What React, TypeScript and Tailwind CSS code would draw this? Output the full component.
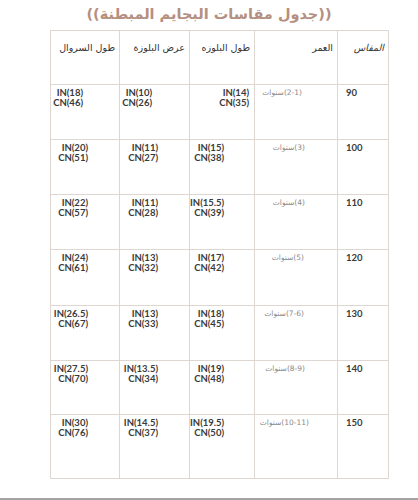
import React from "react";

type Row = {
  size: string;
  age: string;
  agePr: number;
  top: string[];
  topPr: number;
  width: string[];
  widthPr: number;
  pants: string[];
  pantsPr: number;
  h: number;
};

const rows: Row[] = [
  { size: "90", age: "(2-1)سنوات", agePr: 35, top: ["IN(14)", "CN(35)"], topPr: 5, width: ["IN(10)", "CN(26)"], widthPr: 37, pants: ["IN(18)", "CN(46)"], pantsPr: 36, h: 55 },
  { size: "100", age: "(3)سنوات", agePr: 32, top: ["IN(15)", "CN(38)"], topPr: 30, width: ["IN(11)", "CN(27)"], widthPr: 31, pants: ["IN(20)", "CN(51)"], pantsPr: 31, h: 55 },
  { size: "110", age: "(4)سنوات", agePr: 32, top: ["IN(15.5)", "CN(39)"], topPr: 30, width: ["IN(11)", "CN(28)"], widthPr: 31, pants: ["IN(22)", "CN(57)"], pantsPr: 31, h: 55 },
  { size: "120", age: "(5)سنوات", agePr: 33, top: ["IN(17)", "CN(42)"], topPr: 30, width: ["IN(13)", "CN(32)"], widthPr: 31, pants: ["IN(24)", "CN(61)"], pantsPr: 31, h: 56 },
  { size: "130", age: "(7-6)سنوات", agePr: 33, top: ["IN(18)", "CN(45)"], topPr: 30, width: ["IN(13)", "CN(33)"], widthPr: 31, pants: ["IN(26.5)", "CN(67)"], pantsPr: 31, h: 55 },
  { size: "140", age: "(8-9)سنوات", agePr: 32, top: ["IN(19)", "CN(48)"], topPr: 30, width: ["IN(13.5)", "CN(34)"], widthPr: 31, pants: ["IN(27.5)", "CN(70)"], pantsPr: 31, h: 54 },
  { size: "150", age: "(10-11)سنوات", agePr: 28, top: ["IN(19.5)", "CN(50)"], topPr: 30, width: ["IN(14.5)", "CN(37)"], widthPr: 31, pants: ["IN(30)", "CN(76)"], pantsPr: 31, h: 64 },
];

const cell = "border border-[#ddd6d1] align-top p-0";
const num = "font-bold text-[9.5px] leading-[10px] text-[#3a3a3a] text-right pt-[3px] whitespace-nowrap";

const Measure = ({ lines, pr }: { lines: string[]; pr: number }) => (
  <div className={num} style={{ paddingRight: pr }}>
    {lines.map((l) => (
      <div key={l}>{l}</div>
    ))}
  </div>
);

export default function App() {
  return (
    <div className="w-[418px] h-[500px] bg-white flex flex-col" style={{ fontFamily: "Lato, 'DejaVu Sans', sans-serif" }}>
      <div
        dir="rtl"
        className="h-[30px] pt-[4px] text-center text-[14.5px] font-bold text-[#b58f80] leading-[20px]"
        style={{ fontFamily: "'DejaVu Sans', sans-serif" }}
      >
        ((جدول مقاسات البجايم المبطنة))
      </div>
      <div className="pl-[50px]">
        <table className="table-fixed border-collapse w-[338px]">
          <colgroup>
            <col className="w-[69px]" />
            <col className="w-[70px]" />
            <col className="w-[65px]" />
            <col className="w-[83px]" />
            <col className="w-[51px]" />
          </colgroup>
          <thead>
            <tr className="h-[54px]" style={{ fontFamily: "'DejaVu Sans', sans-serif" }}>
              {["طول السروال", "عرض البلوزة", "طول البلوزه", "العمر"].map((t) => (
                <th key={t} dir="rtl" className={`${cell} text-right font-normal text-[9.5px] text-[#333] pt-[10px] pr-[4px]`}>
                  {t}
                </th>
              ))}
              <th dir="rtl" className={`${cell} text-right font-normal italic text-[9.5px] text-[#333] pt-[10px] pr-[4px]`}>
                المقاس
              </th>
            </tr>
          </thead>
          <tbody>
            {rows.map((r) => (
              <tr key={r.size} style={{ height: r.h }}>
                <td className={cell}>
                  <Measure lines={r.pants} pr={r.pantsPr} />
                </td>
                <td className={cell}>
                  <Measure lines={r.width} pr={r.widthPr} />
                </td>
                <td className={cell}>
                  <Measure lines={r.top} pr={r.topPr} />
                </td>
                <td className={cell}>
                  <div
                    dir="rtl"
                    className="text-[7.5px] leading-[10px] text-[#8a8a8a] pt-[3px] whitespace-nowrap"
                    style={{ paddingRight: r.agePr, fontFamily: "'DejaVu Sans', sans-serif" }}
                  >
                    {r.age}
                  </div>
                </td>
                <td className={cell}>
                  <div className="font-bold text-[9.5px] leading-[10px] text-[#3a3a3a] pl-[8px] pt-[3px]">{r.size}</div>
                </td>
              </tr>
            ))}
          </tbody>
        </table>
      </div>
      <div className="flex-1" />
      <div className="h-[2px] bg-[#a3a3a3]" />
    </div>
  );
}
